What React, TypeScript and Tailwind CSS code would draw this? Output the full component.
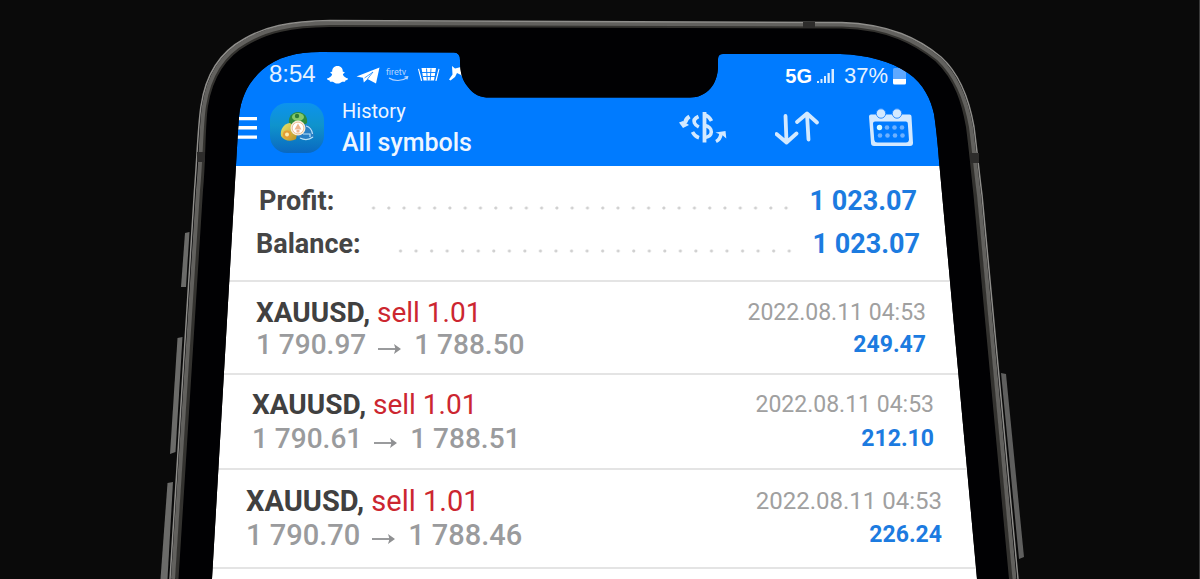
import clsx from "clsx";

interface Deal {
  id: number;
  symbol: string;
  side: string;
  open: string;
  close: string;
  time: string;
  profit: string;
  className: string;
  textSize: string;
  metaSize: string;
}

// Rows get a little wider and taller towards the bottom, the phone is tilted
const DEALS: Deal[] = [
  {
    id: 1,
    symbol: "XAUUSD,",
    side: "sell 1.01",
    open: "1 790.97",
    close: "1 788.50",
    time: "2022.08.11 04:53",
    profit: "249.47",
    className: "pl-14 pr-[74px] pt-[15px] pb-3 leading-8",
    textSize: "text-[28px]",
    metaSize: "text-[23px]",
  },
  {
    id: 2,
    symbol: "XAUUSD,",
    side: "sell 1.01",
    open: "1 790.61",
    close: "1 788.51",
    time: "2022.08.11 04:53",
    profit: "212.10",
    className: "pl-[52px] pr-[66px] pt-[13px] pb-3 leading-[34px]",
    textSize: "text-[28px]",
    metaSize: "text-[23px]",
  },
  {
    id: 3,
    symbol: "XAUUSD,",
    side: "sell 1.01",
    open: "1 790.70",
    close: "1 788.46",
    time: "2022.08.11 04:53",
    profit: "226.24",
    className: "pl-[46px] pr-[58px] pt-[14px] pb-[15px] leading-[34px]",
    textSize: "text-[29px]",
    metaSize: "text-[24px]",
  },
];

function MenuIcon() {
  return (
    <svg width="26" height="24" viewBox="0 0 26 24" fill="#fff">
      <path d="M0 1h25v3.200H0zM0 10h25v3.600H0zM0 19.500h25v3.200H0z" />
    </svg>
  );
}

function AppLogo() {
  return (
    <svg width="54" height="50" viewBox="0 0 54 50">
      <defs>
        <linearGradient id="logoBg" x1="0" y1="0" x2="0" y2="1">
          <stop offset="0" stopColor="#0c93ee" />
          <stop offset="0.450" stopColor="#0f93cc" />
          <stop offset="1" stopColor="#0a68c0" />
        </linearGradient>
        <linearGradient id="logoGold" x1="0" y1="0" x2="1" y2="1">
          <stop offset="0" stopColor="#e8ea70" />
          <stop offset="1" stopColor="#b98a1c" />
        </linearGradient>
      </defs>
      <rect width="54" height="50" rx="17" fill="url(#logoBg)" />
      <path d="M19 20c-1-6 3-11 9-11s10 5 9 11c-4 4-14 4-18 0z" fill="#2f8a3c" />
      <ellipse cx="28" cy="14" rx="6" ry="4" fill="#86c96a" />
      <circle cx="27" cy="13" r="2.200" fill="#2f7d38" />
      <path d="M11 33c-1-6 2-12 9-13l8 6-2 10c-5 3-12 2-15-3z" fill="url(#logoGold)" />
      <circle cx="17" cy="31.500" r="4" fill="#e39d34" />
      <circle cx="17" cy="31.500" r="2" fill="#f8ecb0" />
      <path d="M27 33c3 4 12 5 17 1 0-6-3-11-9-13l-7 5z" fill="#2a7fc4" />
      <path d="M30 35c4 2 9 2 13-1M36 23c4 1 6 4 6.500 8M33 31h7v3" stroke="#b9e2fa" strokeWidth="1.200" fill="none" />
      <circle cx="28" cy="25" r="7.500" fill="#f6ead8" />
      <circle cx="28" cy="25" r="5.800" fill="#fff" stroke="#e9b98a" strokeWidth="0.800" />
      <path d="M28 20.500l3.500 6h-7zM26.500 27h3v2.500h-3z" fill="#eeb48c" />
    </svg>
  );
}

function StatusIcons() {
  return (
    <svg width="142" height="24" viewBox="0 0 142 24" fill="#fff">
      {/* ghost */}
      <path d="M13.500 4c3.600 0 5.400 2.500 5.300 5.700.8.200 1.700 0 1.800.8 0 .9-1.700 1-1.700 1.900.6 2 3 3.500 5.100 4.100.5 1.100-1.600 1.700-2.600 1.900-.3.700 0 1.400-1.300 1.400-1 0-1.900-.1-2.800.4-1 .7-2.200 1.300-3.800 1.300s-2.800-.6-3.800-1.300c-.9-.5-1.800-.4-2.800-.4-1.300 0-1-.7-1.300-1.400-1-.2-3.100-.8-2.600-1.900 2.100-.6 4.500-2.100 5.100-4.100 0-.9-1.700-1-1.700-1.900.1-.8 1-.6 1.800-.8-.1-3.200 1.700-5.700 5.300-5.700z" />
      {/* paper plane */}
      <path d="M32.500 14.500L55.500 5.500l-3.500 16-8.500-4.500-3.700 3.400-.8-4.700z" />
      <path d="M40.500 16l8.500-6-5.500 7" fill="none" stroke="#007bff" strokeWidth="0.700" />
      {/* smile under the tiny label */}
      <path d="M65 16c5 3.400 13 3.400 18.500-.6M80.500 14.800l3.200-.2-.8 2.800" fill="none" stroke="#b5d5ff" strokeWidth="1.200" />
      {/* basket */}
      <path d="M97.500 6h14.500l-2 12.500h-10.500zM94 7l1-.3 3.200 12-1.200.3zM115.500 7l-1-.3-3.200 12 1.200.3z" />
      <path d="M98 10.500h14M99 14.500h12M102.500 6.500l.8 12M107 6.500l-.8 12" stroke="#007bff" strokeWidth="0.900" />
      {/* figure */}
      <path d="M128 4l3 2.500 6-1.500 1.500 5 5 9-1.500 1-5-7-4-2-2 4-4.500 3.500-1.500-1 3.500-5z" />
      <text x="62" y="13" fontFamily="Roboto, sans-serif" fontSize="9" fill="#b5d5ff">
        firetv
      </text>
    </svg>
  );
}

function SignalIcon() {
  return (
    <svg width="20" height="18" viewBox="0 0 20 18" fill="#d9ebff">
      <path d="M1 14h2v2H1zM4.500 12h2v4h-2zM8 9h2v7H8zM11.500 6h2.300v10h-2.300zM15.500 2h2.500v14h-2.500z" />
    </svg>
  );
}

function BatteryIcon() {
  return (
    <svg width="15" height="18" viewBox="0 0 15 18">
      <rect x="1" y="1" width="13" height="15" rx="1.500" fill="#5ea8ff" />
      <path d="M1 12h13v4a1.500 1.500 0 0 1-1.500 1.500h-10A1.500 1.500 0 0 1 1 16z" fill="#fff" />
    </svg>
  );
}

function CurrencyIcon() {
  return (
    <svg width="48" height="34" viewBox="0 0 48 34" fill="none" stroke="#d3e9ff" strokeWidth="3.600">
      <path d="M19.500 5.500c-3.500 1.500-5 4-4 6.500.6 1.700 2 2.800 4.300 4" />
      <path d="M13.500 21c1.500 3 3.500 4.800 6.500 5.800" />
      <path d="M25.500 1v30.500" strokeWidth="3.800" />
      <path d="M26 4c3 1 5 3 6.500 6M26 14.500c4 .8 6.500 3.500 6.300 6.500-.2 3-2.500 5-6.300 5.500" />
      <path d="M10.500 5.500c-2.500 1.500-4 3.500-4.500 6.500" strokeWidth="4" />
      <path d="M0 11.500l4-1.500 6 4-6 3z" fill="#d3e9ff" stroke="none" />
      <path d="M37 30.500c3-1.500 4.500-4 5-7.500" strokeWidth="3.600" />
      <path d="M36.500 21.500l10-1.500.8 7.500-3.500-3z" fill="#d3e9ff" stroke="none" />
    </svg>
  );
}

function SortIcon() {
  return (
    <svg
      width="46"
      height="36"
      viewBox="0 0 46 36"
      fill="none"
      stroke="#d3e9ff"
      strokeWidth="3.800"
      strokeLinecap="round"
      strokeLinejoin="round"
    >
      <path d="M10.500 6l1 26M1.500 24l10 8.500L21.500 23.500" />
      <path d="M33.500 29.500L32 4M22 12l10-8.500L42 12.500" />
    </svg>
  );
}

function CalendarIcon() {
  return (
    <svg width="46" height="40" viewBox="0 0 46 40">
      <path
        fillRule="evenodd"
        d="M2 6.500h38.500a2 2 0 0 1 2 2l1.500 26.500a3 3 0 0 1-3 3H5a3 3 0 0 1-3-3L0 8.500a2 2 0 0 1 2-2zM6 13.500a2 2 0 0 0-2 2l1.300 16.500a3 3 0 0 0 3 2.500h28.700a3 3 0 0 0 3-2.500l-1.200-16.500a2 2 0 0 0-2-2z"
        fill="#d3e9ff"
      />
      <circle cx="12" cy="5.500" r="4.700" fill="#d3e9ff" stroke="#2b8cff" />
      <circle cx="28" cy="5.500" r="4.700" fill="#d3e9ff" stroke="#2b8cff" />
      <g fill="#6db1ff">
        <circle cx="10.500" cy="19.500" r="2.700" fill="#d8fbff" />
        <circle cx="18" cy="19.500" r="2.300" />
        <circle cx="25.500" cy="19.500" r="2.300" />
        <circle cx="33" cy="19.500" r="2.300" />
        <circle cx="11" cy="27.500" r="2.300" />
        <circle cx="18.500" cy="27.500" r="2.300" />
        <circle cx="26" cy="27.500" r="2.300" />
        <circle cx="33.500" cy="27.500" r="2.300" />
      </g>
    </svg>
  );
}

const OUTER =
  "M170 579L194.500 190C197 160 198 125 201 106C206 72 222 51 244 39C264 27 288 21 330 20.500L842 22.500C890 24 919 39 941 57C962 76 970 104 974 127C977 150 979 172 982 195L1018 579";

const SCREEN =
  "M212 579L236 165C237 148 238 130 239 117C241 95 250 81 262 70C277 57 296 52 320 52L454 52.500Q460 52.500 460 60C460 72 462 80 468 87C474 95 480 97.500 490 97.500L690 97.500C707 97.500 718 84 718 66L718 59Q718 54 723 54L840 54C868 55 890 61 908 73C924 84 931 100 934 114C937 134 938 149 939.500 166L977 579Z";

/* Phone body drawn over the app, the screen is a hole in it */
function PhoneFrame() {
  return (
    <svg
      className="pointer-events-none absolute top-0 left-1/2 -translate-x-1/2 max-w-none"
      width="1200"
      height="579"
      viewBox="0 0 1200 579"
      fill="none"
      aria-hidden="true"
    >
      <path d={`M0 0H1200V579H0Z ${SCREEN}`} fill="#0a0a0a" fillRule="evenodd" />
      <path d={`${OUTER}Z ${SCREEN}`} fill="#010103" fillRule="evenodd" />
      {/* side buttons */}
      <path d="M185 233l4.500-1-3.500 55h-5z" fill="#6b6b69" />
      <path d="M177.500 338l5-1-7 115-5.500 2z" fill="#6b6b69" />
      <path d="M167.500 483l5.500-1-5.500 97h-7z" fill="#6b6b69" />
      <path d="M1001 373l5 1L1024 557l-5 2z" fill="#5f5f5e" />
      {/* metal band */}
      <g strokeLinejoin="round">
        <path
          d="M176.500 579L201 190C204 160 203 125 206 106C211 75 225 55 247 43C267 31 290 25.500 330 25L842 26.500C888 28 915 42 937 60C957 79 964 104 968 127C971 150 973 172 975.500 195L1011 579"
          stroke="#33322f"
          strokeWidth="4"
        />
        <path
          d="M173 579L198 190C201 160 201 125 204 106C209 73 224 53 246 41C266 29 289 23.500 330 23L842 24.500C889 26 917 41 939 59C959 78 967 104 971 127C974 150 976 172 979 195L1014.500 579"
          stroke="#62615e"
          strokeWidth="4"
        />
        <path d={OUTER} stroke="#8f8e8b" strokeWidth="1.500" />
        <path d="M197 157h8M970 158h9" stroke="#2d2c2b" strokeWidth="10" />
        <path d="M803 25h12" stroke="#2d2c2b" strokeWidth="6" />
      </g>
      <path d="M1199.500 0V579" stroke="#3a3a3a" />
    </svg>
  );
}

function SummaryRow({ label, value, className }: { label: string; value: string; className: string }) {
  return (
    <div className={clsx("flex items-center text-[27px] leading-[43px] font-bold", className)}>
      <dt className="text-[#454545]">{label}</dt>
      <div className="flex-1 h-1 mt-3 ml-8 mr-4 bg-[radial-gradient(circle,#d0d0d0_1px,transparent_2px)] bg-[length:15px_4px] bg-repeat-space" />
      <dd className="text-[#1c7be0]">{value}</dd>
    </div>
  );
}

export default function App() {
  return (
    <div className="relative min-h-screen overflow-hidden bg-[#0a0a0a] font-['Roboto',sans-serif]">
      <div className="mx-auto w-full max-w-[800px] pt-12">
        <header className="bg-[#007bff] text-white h-[118px]">
          {/* Status bar */}
          <div className="flex items-center justify-between pl-[69px] pr-[93px] pt-3 font-['Liberation_Sans',sans-serif]">
            <div className="flex items-center gap-2">
              <span className="text-2xl leading-7 text-[#e6f2ff]">8:54</span>
              <StatusIcons />
            </div>
            <div className="flex items-center gap-1 pt-1">
              <span className="text-xl leading-6 font-bold">5G</span>
              <SignalIcon />
              <span className="pl-1 text-[22px] leading-6 text-[#e6f2ff]">37%</span>
              <BatteryIcon />
            </div>
          </div>

          {/* Toolbar */}
          <div className="flex items-center pl-8 pr-[85px] pt-2">
            <button aria-label="Menu">
              <MenuIcon />
            </button>
            <div className="ml-3">
              <AppLogo />
            </div>
            <h1 className="ml-[18px] flex-1 text-[#eef6ff]">
              <span className="block text-xl leading-[30px]">History</span>
              <span className="block text-[25px] leading-[34px] font-medium">All symbols</span>
            </h1>
            <div className="flex items-center gap-12">
              <button aria-label="Currency">
                <CurrencyIcon />
              </button>
              <button aria-label="Sort">
                <SortIcon />
              </button>
              <button aria-label="Calendar">
                <CalendarIcon />
              </button>
            </div>
          </div>
        </header>

        <main className="bg-white pb-4">
          <dl className="border-b-2 border-[#e4e4e4] py-[14px]">
            <SummaryRow label="Profit:" value="1 023.07" className="pl-[59px] pr-[83px]" />
            <SummaryRow label="Balance:" value="1 023.07" className="pl-14 pr-[80px]" />
          </dl>

          <ul>
            {DEALS.map((deal) => (
              <li
                key={deal.id}
                className={clsx("flex justify-between border-b-2 border-[#e4e4e4]", deal.className)}
              >
                <div className={deal.textSize}>
                  <div>
                    <span className="font-bold text-[#404040]">{deal.symbol}</span>{" "}
                    <span className="text-[#cc2630]">{deal.side}</span>
                  </div>
                  <div className="flex items-center font-medium text-[#9a9b9d]">
                    {deal.open}
                    <svg
                      className="mx-3 mt-2"
                      width="24"
                      height="12"
                      viewBox="0 0 24 12"
                      fill="none"
                      stroke="#8f9092"
                      strokeWidth="1.800"
                    >
                      <path d="M0 6h20" />
                      <path d="M16 1l7 5-7 5 1.500-5z" fill="#8f9092" stroke="none" />
                    </svg>
                    {deal.close}
                  </div>
                </div>
                <div className="text-right">
                  <div className={clsx("text-[#a0a0a0]", deal.metaSize)}>{deal.time}</div>
                  <div className="text-[23px] font-bold text-[#1c7be0]">{deal.profit}</div>
                </div>
              </li>
            ))}
          </ul>
        </main>
      </div>
      <PhoneFrame />
    </div>
  );
}
